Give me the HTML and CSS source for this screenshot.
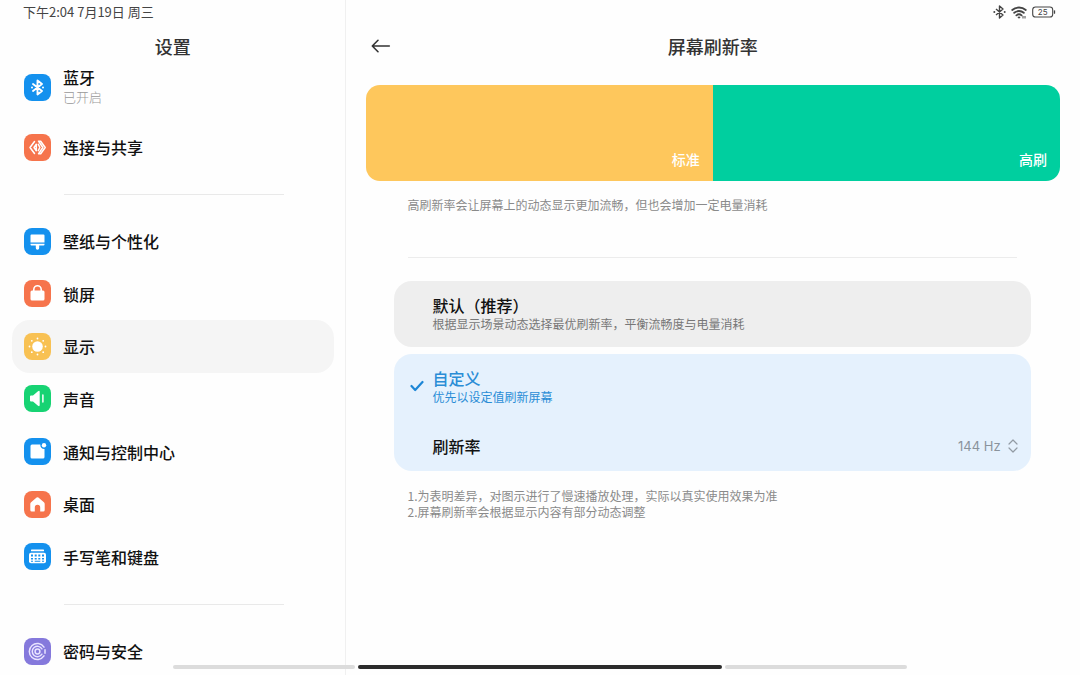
FILE: index.html
```html
<!DOCTYPE html>
<html lang="zh-CN">
<head>
<meta charset="utf-8">
<meta name="viewport" content="width=device-width, initial-scale=1">
<title>屏幕刷新率</title>
<link rel="stylesheet" href="styles.css">
</head>
<body>
<div class="app">
  <aside class="sidebar">
    <div class="status">下午2:04 7月19日 周三</div>
    <header class="bar"><h2 class="title">设置</h2></header>
    <nav class="nav">
      <a class="row row-bluetooth" href="#bluetooth">
        <svg class="icon blue" viewBox="0 0 27 27" aria-hidden="true"><path d="M9 10l9 7-4.500 3.500v-14L18 10l-9 7" fill="none" stroke="#fff" stroke-width="1.900" stroke-linejoin="round" stroke-linecap="round"/><circle cx="8" cy="13.500" r="1" fill="#fff"/><circle cx="19" cy="13.500" r="1" fill="#fff"/></svg>
        <span class="text"><span class="name">蓝牙</span><span class="state">已开启</span></span>
      </a>
      <a class="row" href="#share">
        <svg class="icon orange" viewBox="0 0 27 27" aria-hidden="true"><g fill="none" stroke="#fff" stroke-width="1.500" stroke-linejoin="round" stroke-linecap="round"><path d="M10.500 7.500L6 13.500l4.500 6M14.500 7.200h2.200l4.500 6.300-4.500 6.300h-2.200l4.300-6.300z"/><path d="M12.300 10.300L10 13.500l2.300 3.200zM14.300 10.300l1.600 3.200-1.600 3.200"/></g></svg>
        <span class="name">连接与共享</span>
      </a>
      <hr class="rule">
      <div class="group">
        <a class="row" href="#wallpaper">
          <svg class="icon blue" viewBox="0 0 27 27" aria-hidden="true"><path d="M7.500 6.500h12a1 1 0 0 1 1 1v7h-14v-7a1 1 0 0 1 1-1zM6.500 15.800h14v.7a1 1 0 0 1-1 1h-4.300v2.500a1.700 1.700 0 0 1-3.400 0v-2.500H7.500a1 1 0 0 1-1-1z" fill="#fff"/></svg>
          <span class="name">壁纸与个性化</span>
        </a>
        <a class="row" href="#lock">
          <svg class="icon orange" viewBox="0 0 27 27" aria-hidden="true"><rect x="6.500" y="10.500" width="14" height="10" rx="1.500" fill="#fff"/><path d="M9.800 11V9.500a3.700 3.700 0 0 1 7.400 0V11" fill="none" stroke="#fff" stroke-width="1.600"/></svg>
          <span class="name">锁屏</span>
        </a>
        <a class="row selected" href="#display" aria-current="page">
          <svg class="icon yellow" viewBox="0 0 27 27" aria-hidden="true"><g fill="#fff"><circle cx="13.500" cy="13.500" r="5.300"/><circle cx="13.500" cy="5.500" r=".9"/><circle cx="13.500" cy="21.500" r=".9"/><circle cx="5.500" cy="13.500" r=".9"/><circle cx="21.500" cy="13.500" r=".9"/><circle cx="7.800" cy="7.800" r=".9"/><circle cx="19.200" cy="7.800" r=".9"/><circle cx="7.800" cy="19.200" r=".9"/><circle cx="19.200" cy="19.200" r=".9"/></g></svg>
          <span class="name">显示</span>
        </a>
        <a class="row" href="#sound">
          <svg class="icon green" viewBox="0 0 27 27" aria-hidden="true"><path d="M7 10.500h2l5-4.300q1.700-1 1.700.7v13.200q0 1.700-1.700.7l-5-4.300H7q-1 0-1-1v-4q0-1 1-1z" fill="#fff"/><path d="M18.900 10v7" stroke="#fff" stroke-width="1.500" stroke-linecap="round"/></svg>
          <span class="name">声音</span>
        </a>
        <a class="row" href="#notifications">
          <svg class="icon blue" viewBox="0 0 27 27" aria-hidden="true"><path d="M8 6.500h8.300a4 4 0 0 0 4.200 4.500v8a1.500 1.500 0 0 1-1.500 1.500H8A1.500 1.500 0 0 1 6.500 19V8A1.500 1.500 0 0 1 8 6.500z" fill="#fff"/><circle cx="20" cy="7.300" r="2.200" fill="#fff"/></svg>
          <span class="name">通知与控制中心</span>
        </a>
        <a class="row" href="#home">
          <svg class="icon orange" viewBox="0 0 27 27" aria-hidden="true"><path d="M12.600 6.600q.9-.7 1.800 0l5.500 4.700q.8.700.8 1.700v6q0 1.500-1.500 1.500h-3v-4a2.700 2.700 0 0 0-5.400 0v4h-3q-1.500 0-1.500-1.500v-6q0-1 .8-1.700z" fill="#fff"/></svg>
          <span class="name">桌面</span>
        </a>
        <a class="row" href="#keyboard">
          <svg class="icon blue" viewBox="0 0 27 27" aria-hidden="true"><rect x="7" y="6.500" width="13" height="1.800" rx=".6" fill="#fff"/><rect x="5" y="9.800" width="17" height="10.500" rx="2" fill="#fff"/><g fill="#1491ee"><path d="M7 11.500h2v2H7zM10.700 11.500h2v2h-2zM14.300 11.500h2v2h-2zM18 11.500h2v2h-2zM7 15h2v1.400H7zM10.700 15h2v1.400h-2zM14.300 15h2v1.400h-2zM18 15h2v1.400h-2zM7 17.800h2v1H7zM10.700 17.800h5.600v1h-5.600zM18 17.800h2v1h-2z"/></g></svg>
          <span class="name">手写笔和键盘</span>
        </a>
      </div>
      <hr class="rule">
      <a class="row" href="#security">
        <svg class="icon purple" viewBox="0 0 27 27" aria-hidden="true"><g fill="none" stroke="#e9e4ff" stroke-width="1.500" stroke-linecap="round"><path d="M20 9.100a8 8 0 1 0 0 8.800M21 11.800v3.400"/><path d="M17.900 16.200a5.200 5.200 0 1 1 0-5.400"/><circle cx="13.500" cy="13.500" r="2.400"/></g></svg>
        <span class="name">密码与安全</span>
      </a>
    </nav>
  </aside>

  <main class="main">
    <div class="status status-icons">
      <svg width="13" height="14" viewBox="0 0 13 14" aria-hidden="true"><path d="M3 4l7 6-3.500 3V1L10 4l-7 6" fill="none" stroke="#444" stroke-width="1.400" stroke-linejoin="round"/><circle cx="1.300" cy="7" r="1" fill="#444"/><circle cx="11.700" cy="7" r="1" fill="#444"/></svg>
      <svg width="16" height="13" viewBox="0 0 16 13" aria-hidden="true"><g fill="none" stroke="#444" stroke-width="1.800" stroke-linecap="round"><path d="M1.200 4a10.500 10.500 0 0 1 13.600 0M3.200 6.800a7.300 7.300 0 0 1 9.600 0M5.400 9.400a4 4 0 0 1 5.200 0"/></g><path d="M6.300 11q1.700-1.200 3.400 0L8 12.800z" fill="#444"/><path d="M12 10v2.500M14 12.500V10" stroke="#444"/></svg>
      <svg width="24" height="12" viewBox="0 0 24 12" role="img" aria-label="25"><rect x=".7" y="1" width="20" height="10" rx="2.800" fill="none" stroke="#444" stroke-width="1.100"/><path d="M22.500 4.800v2.400" stroke="#444" stroke-width="1.300" stroke-linecap="round"/><text x="10.700" y="9" text-anchor="middle" class="battery">25</text></svg>
    </div>
    <header class="bar">
      <button class="back" type="button" aria-label="返回"><svg width="20" height="14" viewBox="0 0 20 14" aria-hidden="true"><path d="M18.300 7H1.500M7 1.300L1.300 7 7 12.700" fill="none" stroke="#333" stroke-width="1.600" stroke-linecap="round" stroke-linejoin="round"/></svg></button>
      <h1 class="title">屏幕刷新率</h1>
    </header>
    <div class="page">
      <div class="demo">
        <div class="half standard">标准</div>
        <div class="half high">高刷</div>
      </div>
      <div class="content">
        <p class="note">高刷新率会让屏幕上的动态显示更加流畅，但也会增加一定电量消耗</p>
        <hr class="line">
        <form class="options">
          <label class="card option">
            <input class="radio" type="radio" name="mode">
            <span class="text"><span class="name">默认（推荐）</span><span class="desc">根据显示场景动态选择最优刷新率，平衡流畅度与电量消耗</span></span>
          </label>
          <div class="card active">
            <label class="option">
              <input class="radio" type="radio" name="mode" checked>
              <svg class="check" width="14" height="12" viewBox="0 0 14 12" aria-hidden="true"><path d="M1.500 6l3.700 4L12.500 2" fill="none" stroke="#1c86d6" stroke-width="2.200" stroke-linecap="round" stroke-linejoin="round"/></svg>
              <span class="text"><span class="name">自定义</span><span class="desc">优先以设定值刷新屏幕</span></span>
            </label>
            <div class="rate">
              <label class="name" for="rate">刷新率</label>
              <span class="picker">
                <select id="rate" class="select"><option>144 Hz</option></select>
                <svg width="10" height="14" viewBox="0 0 10 14" aria-hidden="true"><path d="M1 5l4-4 4 4M1 9l4 4 4-4" fill="none" stroke="#929ba4" stroke-width="1.200" stroke-linecap="round" stroke-linejoin="round"/></svg>
              </span>
            </div>
          </div>
        </form>
        <div class="note footnotes">
          <p>1.为表明差异，对图示进行了慢速播放处理，实际以真实使用效果为准</p>
          <p>2.屏幕刷新率会根据显示内容有部分动态调整</p>
        </div>
      </div>
    </div>
  </main>
  <div class="home-bar" aria-hidden="true"><i></i><i class="current"></i><i></i></div>
</div>
</body>
</html>
```
FILE: styles.css
```css
* { box-sizing: border-box; }

body {
  margin: 0;
  background: #fefefe;
  color: #111;
  font-family: "Noto Sans CJK SC", sans-serif;
  font-size: 16px;
}

h1, h2, p { margin: 0; font-weight: inherit; }

.app {
  position: relative;
  display: grid;
  grid-template-columns: 32% 1fr;
  height: 100vh;
  overflow: hidden;
}

.sidebar {
  min-width: 0;
  padding: 0 11px 0 12px;
  border-right: 1px solid #f0f0f0;
}

.status {
  display: flex;
  align-items: center;
  height: 24px;
  padding-left: 11px;
  color: #444;
  font-size: 13px;
  line-height: 22px;
}

.status-icons { justify-content: flex-end; gap: 5px; padding-right: 24px; }

.battery { fill: #444; font: 8px "Inter", sans-serif; }

.bar {
  position: relative;
  display: flex;
  align-items: center;
  justify-content: center;
  height: 43px;
}

.title { color: #333; font-size: 18px; font-weight: 500; line-height: 24px; }

.row {
  display: flex;
  align-items: center;
  gap: 12px;
  min-height: 52px;
  padding: 0 12px;
  border-radius: 18px;
  color: inherit;
  text-decoration: none;
}

.row-bluetooth { min-height: 40px; margin-bottom: 14px; }

.selected { background: #f5f5f5; }

.icon { flex: none; width: 27px; height: 27px; border-radius: 8px; }
.blue { background: #1491ee; }
.orange { background: #f6744c; }
.yellow { background: #f8c153; }
.green { background: #17d373; }
.purple { background: #8579dc; }

.text { display: flex; flex-direction: column; }
.name { font-weight: 500; line-height: 20px; }
.state { color: #999; font-size: 13px; font-weight: 300; line-height: 20px; }

.group { display: grid; grid-auto-rows: 1fr; min-height: 368px; }

.rule {
  height: 1px;
  margin: 21px 50px 20px 52px;
  border: 0;
  background: #e9e9e9;
}

.main { min-width: 0; }

.back {
  position: absolute;
  left: 25px;
  display: flex;
  padding: 0;
  border: 0;
  background: none;
}

.page { padding: 18px 20px 0; }

.demo {
  display: grid;
  grid-template-columns: 1fr 1fr;
  height: 96px;
  border-radius: 14px;
  overflow: hidden;
}

.half {
  display: flex;
  align-items: flex-end;
  justify-content: flex-end;
  padding: 12px 13px;
  color: #fff;
  font-size: 14px;
  font-weight: 500;
  line-height: 20px;
}

.standard { background: #fec75c; }
.high { background: #00cf9f; }

.content { padding: 16px 29px 0 28px; }

.note {
  padding: 0 14px;
  color: #8a8a8a;
  font-size: 12px;
  line-height: 16px;
}

.line { height: 1px; margin: 44px 14px 23px; border: 0; background: #ececec; }

.options { display: grid; gap: 7px; }

.card { border-radius: 18px; background: #eee; }

.option { position: relative; display: block; padding: 14px 39px; }

.radio { position: absolute; inset: 0; margin: 0; opacity: 0; }

.desc { color: #777; font-size: 12px; line-height: 18px; }

.active { background: #e5f1fd; }
.active .text, .active .desc { color: #2a8dd6; }

.check { position: absolute; left: 16px; top: 26px; }

.rate {
  display: flex;
  align-items: center;
  justify-content: space-between;
  min-height: 51px;
  padding: 0 13px 0 39px;
}

.picker { display: flex; align-items: center; gap: 7px; }

.select {
  appearance: none;
  padding: 0;
  border: 0;
  background: none;
  color: #8a939c;
  font: 13px "Inter", sans-serif;
}

.footnotes { padding-top: 17px; }

.home-bar {
  position: absolute;
  right: 16%;
  bottom: 6px;
  left: 16%;
  display: grid;
  grid-template-columns: 1fr 2fr 1fr;
  gap: 3px;
}

.home-bar i { height: 4px; border-radius: 2px; background: #dcdcdc; }
.home-bar .current { background: #2b2b2b; }
```
